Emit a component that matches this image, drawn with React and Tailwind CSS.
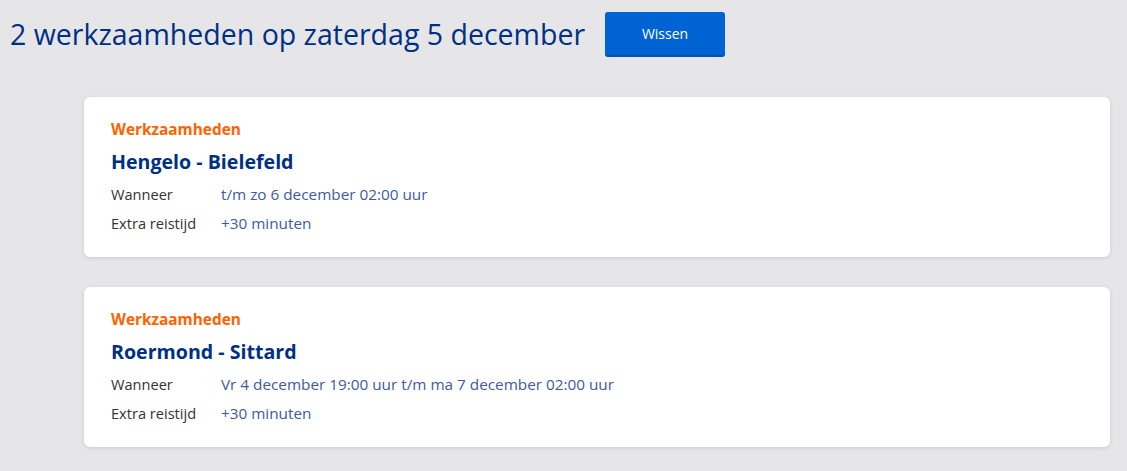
const items = [
  {
    id: 1,
    title: "Hengelo - Bielefeld",
    when: "t/m zo 6 december 02:00 uur",
    extra: "+30 minuten"
  },
  {
    id: 2,
    title: "Roermond - Sittard",
    when: "Vr 4 december 19:00 uur t/m ma 7 december 02:00 uur",
    extra: "+30 minuten"
  }
];

const WorkCard = ({ item }) => (
  <article className="rounded-md bg-white px-[27px] pt-[22px] pb-[19px] shadow-[0_1px_4px_rgba(0,0,0,0.12)]">
    <p className="text-[15.4px] font-bold leading-[22px] text-[#ff6200]">Werkzaamheden</p>
    <h3 className="mt-[8px] text-[19.6px] font-bold leading-[26px] text-[#003082]">{item.title}</h3>
    <dl className="mt-[5px] leading-[29px]">
      <div className="flex">
        <dt className="w-[110px] text-[14.6px] text-[#333338]">Wanneer</dt>
        <dd className="text-[15.3px] text-[#3e5aa0]">{item.when}</dd>
      </div>
      <div className="flex">
        <dt className="w-[110px] text-[14.6px] text-[#333338]">Extra reistijd</dt>
        <dd className="text-[15.3px] text-[#3e5aa0]">{item.extra}</dd>
      </div>
    </dl>
  </article>
);

const App = () => {
  return (
    <main className="min-h-[471px] bg-[#e6e6e9] font-['Open_Sans',sans-serif]">
      <header className="flex items-center pl-[10px] pt-[12px]">
        <h2 className="text-[28.5px] leading-[45px] text-[#003082]">2 werkzaamheden op zaterdag 5 december</h2>
        <button
          type="button"
          className="ml-[20px] h-[45px] w-[120px] rounded-[3px] border-b-2 border-[#0050b0] bg-[#0063d3] text-[14px] text-white"
        >
          Wissen
        </button>
      </header>

      <div className="ml-[84px] mr-[17px] mt-[40px] space-y-[30px] pb-[24px]">
        {items.map((item) => (
          <WorkCard key={item.id} item={item} />
        ))}
      </div>
    </main>
  );
};

export default App;
